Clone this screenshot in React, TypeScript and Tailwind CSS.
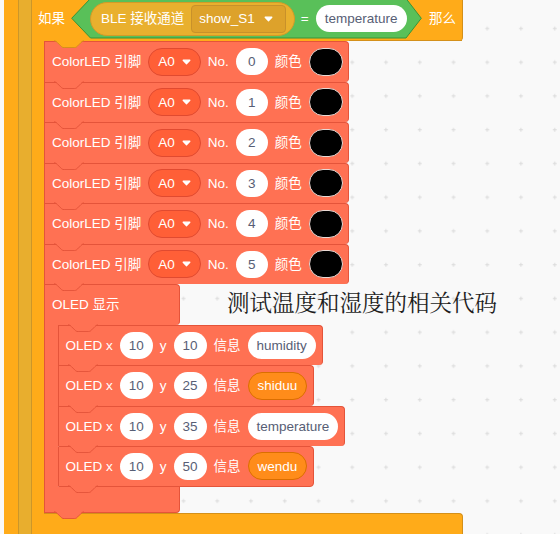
import React from "react";

const FONT = "[font-family:'Liberation_Sans','Noto_Sans_CJK_SC',sans-serif]";

function Tab({ fill, stroke, className }: { fill: string; stroke: string; className: string }) {
  return (
    <svg
      className={`pointer-events-none absolute top-full z-10 -mt-px ${className}`}
      width="30.375"
      height="8.4375"
      viewBox="0 -1 36 10"
    >
      <path
        d="M0,-1 V0 c2,0 3,1 4,2 l4,4 c1,1 2,2 4,2 h12 c2,0 3,-1 4,-2 l4,-4 c1,-1 2,-2 4,-2 V-1 Z"
        fill={fill}
      />
      <path
        d="M0,0 c2,0 3,1 4,2 l4,4 c1,1 2,2 4,2 h12 c2,0 3,-1 4,-2 l4,-4 c1,-1 2,-2 4,-2"
        fill="none"
        stroke={stroke}
        strokeWidth="1"
        vectorEffect="non-scaling-stroke"
      />
    </svg>
  );
}

function Arrow() {
  return (
    <svg width="9" height="6" viewBox="0 0 9 6">
      <path d="M1.2,1.2 H7.8 L4.5,4.8 Z" fill="white" stroke="white" strokeWidth="1.3" strokeLinejoin="round" />
    </svg>
  );
}

function WhitePill({ children }: { children: React.ReactNode }) {
  return (
    <span className="flex h-[27px] min-w-[32px] items-center justify-center rounded-full bg-white px-[9px] text-[#575E75]">
      {children}
    </span>
  );
}

function VarPill({ children }: { children: React.ReactNode }) {
  return (
    <span className="flex h-[28px] items-center justify-center rounded-full border border-[#DB6E00] bg-[#FF8C1A] px-[9px] text-white">
      {children}
    </span>
  );
}

function ColorLedBlock({ n }: { n: string }) {
  return (
    <div className="relative flex h-[40.5px] items-center gap-[7px] rounded-r-[4px] border-x border-t border-[#E4543A] bg-[#FF7153] pl-[7px] pr-[5px] text-white">
      <span>ColorLED 引脚</span>
      <span className="flex h-[28px] items-center gap-[7px] rounded-full border border-[#E04A30] bg-[#FF5F37] pl-[9px] pr-[9px]">
        A0
        <Arrow />
      </span>
      <span>No.</span>
      <WhitePill>{n}</WhitePill>
      <span>颜色</span>
      <span className="block h-[28px] w-[34px] rounded-full border border-[#E9D9D4] bg-black" />
      <Tab fill="#FF7153" stroke="#E4543A" className="left-[9px]" />
    </div>
  );
}

const oledRows = [
  { x: "10", y: "10", msg: "humidity", v: false },
  { x: "10", y: "25", msg: "shiduu", v: true },
  { x: "10", y: "35", msg: "temperature", v: false },
  { x: "10", y: "50", msg: "wendu", v: true },
];

function OledRow({ x, y, msg, v, last }: { x: string; y: string; msg: string; v: boolean; last: boolean }) {
  return (
    <div
      className={`relative flex h-[40.5px] items-center gap-[7px] rounded-r-[4px] border-x border-t border-[#E4543A] bg-[#FF7153] pl-[7px] pr-[6px] text-white ${
        last ? "border-b" : ""
      }`}
    >
      <span>OLED x</span>
      <WhitePill>{x}</WhitePill>
      <span>y</span>
      <WhitePill>{y}</WhitePill>
      <span>信息</span>
      {v ? <VarPill>{msg}</VarPill> : <WhitePill>{msg}</WhitePill>}
      <Tab fill="#FF7153" stroke="#E4543A" className="left-[9px]" />
    </div>
  );
}

function GridBackground() {
  return (
    <svg className="absolute inset-0" width="560" height="534">
      <defs>
        <pattern id="grid" width="33.75" height="33.75" patternUnits="userSpaceOnUse">
          <path d="M12.75,28.5 H16.75 M14.75,26.5 V30.5" stroke="#DADADA" strokeWidth="1" />
        </pattern>
      </defs>
      <rect width="560" height="534" fill="url(#grid)" />
    </svg>
  );
}

export default function App() {
  return (
    <div className={`relative h-[534px] w-[560px] overflow-hidden bg-[#F9F9F9] text-[13.5px] leading-none ${FONT}`}>
      <GridBackground />

      {/* If block */}
      <div className="absolute left-[4px] top-[-4px] flex w-[459px] flex-col">
        {/* header */}
        <div className="relative flex h-[45px] items-center rounded-br-[4px] border-r border-[#D4901A] bg-[#FFAB19] pl-[34px] text-white">
          <span>如果</span>
          <div className="relative ml-[6px] flex h-[40.5px] w-[351px] items-center pl-[19px]">
            <svg className="absolute inset-0" width="351" height="40.5" viewBox="0 0 351 40.5">
              <polygon
                points="0.7,20.25 19.5,0.5 335,0.5 350.3,20.25 335,40 19.5,40"
                fill="#59C059"
                stroke="#389438"
                strokeWidth="1"
              />
            </svg>
            <div className="relative flex h-[34px] items-center gap-[7px] rounded-full border border-[#D29B28] bg-[#E9B02E] pl-[10px] pr-[8px]">
              <span>BLE 接收通道</span>
              <span className="flex h-[28px] items-center gap-[9px] rounded-[4px] border border-[#C8912A] bg-[#DDA22B] pl-[7px] pr-[12px]">
                show_S1
                <Arrow />
              </span>
            </div>
            <span className="relative ml-[6px]">=</span>
            <span className="relative ml-[7px]">
              <WhitePill>temperature</WhitePill>
            </span>
          </div>
          <span className="ml-[7px]">那么</span>
          <div className="absolute bottom-0 left-[345px] right-0 h-px bg-[#D4901A]" />
          <Tab fill="#FFAB19" stroke="#D4901A" className="left-[50px]" />
        </div>

        {/* body */}
        <div className="flex">
          <div className="w-[40px] shrink-0 bg-[#FFAB19]" />
          <div className="flex flex-col items-start">
            {["0", "1", "2", "3", "4", "5"].map((n) => (
              <ColorLedBlock key={n} n={n} />
            ))}

            {/* OLED C block */}
            <div className="flex flex-col items-start">
              <div className="relative flex h-[40.5px] w-[136px] items-center rounded-r-[4px] border-x border-t border-[#E4543A] bg-[#FF7153] pl-[7px] text-white">
                <span>OLED 显示</span>
                <Tab fill="#FF7153" stroke="#E4543A" className="left-[22.5px]" />
              </div>
              <div className="flex">
                <div className="w-[13.5px] shrink-0 border-l border-[#E4543A] bg-[#FF7153]" />
                <div className="flex flex-col items-start">
                  {oledRows.map((r, i) => (
                    <OledRow key={i} {...r} last={i === oledRows.length - 1} />
                  ))}
                </div>
              </div>
              <div className="relative h-[26px] w-[136px] rounded-br-[4px] border-x border-b border-[#E4543A] bg-[#FF7153]">
                <Tab fill="#FF7153" stroke="#E4543A" className="left-[9px]" />
              </div>
            </div>
          </div>
        </div>

        {/* footer */}
        <div className="flex h-[30px]">
          <div className="w-[40px] shrink-0 bg-[#FFAB19]" />
          <div className="flex-1 rounded-tr-[4px] border-r border-t border-[#D4901A] bg-[#FFAB19]" />
        </div>

        {/* stripe */}
        <div className="absolute bottom-0 left-[14px] top-0 z-[5] w-[13.5px] border-x border-[#CC962A] bg-[#E8AE2E]" />
      </div>

      {/* comment text */}
      <div className="absolute left-[227px] top-[290px] text-[22.5px] leading-none text-[#1E1E1E] [font-family:'Noto_Serif_CJK_SC','Noto_Sans_CJK_SC',serif]">
        测试温度和湿度的相关代码
      </div>
    </div>
  );
}
